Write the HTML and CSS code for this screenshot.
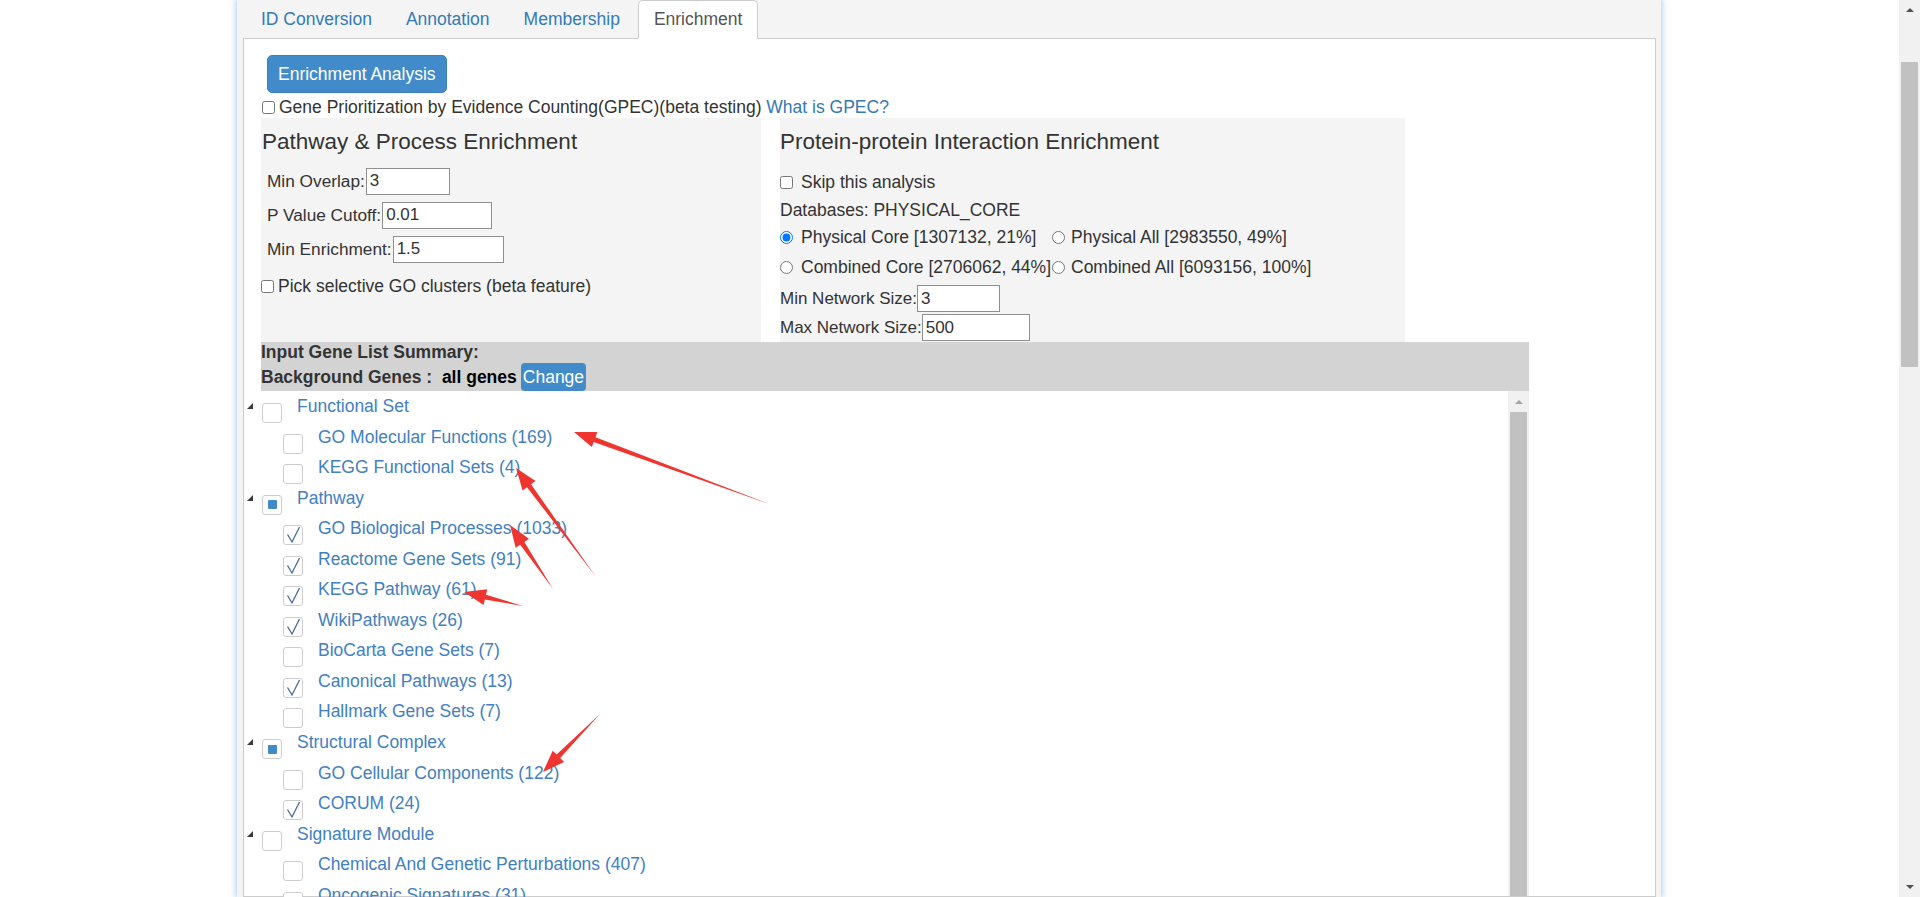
FILE: index.html
```html
<!DOCTYPE html>
<html lang="en">
  <head>
    <meta charset="UTF-8" />
    <meta name="viewport" content="width=device-width, initial-scale=1.0" />
    <title>Metascape - Enrichment</title>
    <link rel="stylesheet" href="styles.css">
  </head>
  <body>
    <div class="viewport">
      <div class="page">
        <div class="frame">
          <ul class="tabs">
            <li><a href="#">ID Conversion</a></li>
            <li><a href="#">Annotation</a></li>
            <li><a href="#">Membership</a></li>
            <li class="active"><a href="#">Enrichment</a></li>
          </ul>
          <div class="panel">
            <button class="btn-run">Enrichment Analysis</button>
            <div class="gpec">
              <input type="checkbox" class="cbx">Gene Prioritization by Evidence Counting(GPEC)(beta testing)&nbsp;<a href="#" class="link">What is GPEC?</a>
            </div>

            <div class="opts">
              <div class="box box-left">
                <h4>Pathway &amp; Process Enrichment</h4>
                <div class="field field-first">Min Overlap:<input type="text" class="num w84" value="3"></div>
                <div class="field">P Value Cutoff:<input type="text" class="num w110" value="0.01"></div>
                <div class="field">Min Enrichment:<input type="text" class="num w111" value="1.5"></div>
                <div class="pick"><input type="checkbox" class="cbx">Pick selective GO clusters (beta feature)</div>
              </div>
              <div class="box box-right">
                <h4>Protein-protein Interaction Enrichment</h4>
                <div class="row skip"><input type="checkbox" class="cbx cbx-gap">Skip this analysis</div>
                <div class="row db">Databases: PHYSICAL_CORE</div>
                <div class="radios">
                  <label><input type="radio" name="db" checked>Physical Core [1307132, 21%]</label>
                  <label class="col2"><input type="radio" name="db">Physical All [2983550, 49%]</label>
                  <label><input type="radio" name="db">Combined Core [2706062, 44%]</label>
                  <label class="col2"><input type="radio" name="db">Combined All [6093156, 100%]</label>
                </div>
                <div class="row net">Min Network Size:<input type="text" class="num w83" value="3"></div>
                <div class="row net">Max Network Size:<input type="text" class="num w108" value="500"></div>
              </div>
            </div>

            <div class="summary">
              <div class="sum-line">Input Gene List Summary:</div>
              <div class="sum-line sum-bg">Background Genes :&nbsp;&nbsp;<span class="all">all genes</span><button class="btn-change">Change</button></div>
            </div>

            <div class="tree-wrap">
              <ul class="tree">
                <li class="node parent"><i class="tri"></i><span class="cb"></span><a href="#">Functional Set</a></li>
                <li class="node child"><span class="cb"></span><a href="#">GO Molecular Functions (169)</a></li>
                <li class="node child"><span class="cb"></span><a href="#">KEGG Functional Sets (4)</a></li>

                <li class="node parent"><i class="tri"></i><span class="cb part"><b></b></span><a href="#">Pathway</a></li>
                <li class="node child"><span class="cb"><svg viewBox="0 0 20 20"><polyline points="4.5,9.5 9,17 16.5,2"/></svg></span><a href="#">GO Biological Processes (1033)</a></li>
                <li class="node child"><span class="cb"><svg viewBox="0 0 20 20"><polyline points="4.5,9.5 9,17 16.5,2"/></svg></span><a href="#">Reactome Gene Sets (91)</a></li>
                <li class="node child"><span class="cb"><svg viewBox="0 0 20 20"><polyline points="4.5,9.5 9,17 16.5,2"/></svg></span><a href="#">KEGG Pathway (61)</a></li>
                <li class="node child"><span class="cb"><svg viewBox="0 0 20 20"><polyline points="4.5,9.5 9,17 16.5,2"/></svg></span><a href="#">WikiPathways (26)</a></li>
                <li class="node child"><span class="cb"></span><a href="#">BioCarta Gene Sets (7)</a></li>
                <li class="node child"><span class="cb"><svg viewBox="0 0 20 20"><polyline points="4.5,9.5 9,17 16.5,2"/></svg></span><a href="#">Canonical Pathways (13)</a></li>
                <li class="node child"><span class="cb"></span><a href="#">Hallmark Gene Sets (7)</a></li>

                <li class="node parent"><i class="tri"></i><span class="cb part"><b></b></span><a href="#">Structural Complex</a></li>
                <li class="node child"><span class="cb"></span><a href="#">GO Cellular Components (122)</a></li>
                <li class="node child"><span class="cb"><svg viewBox="0 0 20 20"><polyline points="4.5,9.5 9,17 16.5,2"/></svg></span><a href="#">CORUM (24)</a></li>

                <li class="node parent"><i class="tri"></i><span class="cb"></span><a href="#">Signature Module</a></li>
                <li class="node child"><span class="cb"></span><a href="#">Chemical And Genetic Perturbations (407)</a></li>
                <li class="node child"><span class="cb"></span><a href="#">Oncogenic Signatures (31)</a></li>
              </ul>
              <div class="vscroll">
                <div class="up"><i></i></div>
                <div class="thumb"></div>
              </div>
            </div>
          </div>
        </div>
      </div>

      <div class="scrollbar">
        <div class="up"><i></i></div>
        <div class="thumb"></div>
        <div class="down"><i></i></div>
      </div>

      <!-- red arrows drawn on the screenshot -->
      <svg class="marks" width="1920" height="897" viewBox="0 0 1920 897">
        <polygon points="769,504 595.5,437.3 597.4,432.1 574,432 591.8,447.1 593.7,442" />
        <polygon points="596,577 531,484.2 535.5,481 516,468 522.6,490.4 527,487.2" />
        <polygon points="553,589 524.4,541.9 528.9,538.8 510,525 515.7,547.8 520.2,544.7" />
        <polygon points="523,606 486,594.7 487.3,589.3 464,592 483.6,604.9 484.8,599.5" />
        <polygon points="600,714 556.6,754.5 552.7,750.7 543,772 564.1,761.9 560.2,758.1" />
      </svg>
    </div>
  </body>
</html>
```

FILE: styles.css
```css
* {
  box-sizing: border-box;
}
html, body {
  margin: 0;
  height: 100%;
  overflow: hidden;
}
body {
  font-family: "Liberation Sans", Arial, sans-serif;
  font-size: 17.5px;
  color: #333;
  background: #fff;
}
a {
  color: #337ab7;
  text-decoration: none;
}
.viewport {
  display: flex;
  height: 897px;
  position: relative;
}
.page {
  flex: 1;
}
.frame {
  margin-left: 237px;
  width: 1424px;
  height: 100%;
  background: #f4f4f4;
  padding: 0 5px 0 6px;
  box-shadow: 0 0 6px 1px rgba(110, 165, 230, 0.6);
  display: flex;
  flex-direction: column;
}

/* tabs */
.tabs {
  list-style: none;
  margin: 0 0 -1px;
  padding: 0 0 0 2px;
  display: flex;
  height: 39px;
  position: relative;
  z-index: 1;
}
.tabs li {
  margin-right: 2px;
}
.tabs a {
  display: block;
  padding: 8px 15px 9px;
  line-height: 20px;
  border: 1px solid transparent;
  border-radius: 5px 5px 0 0;
}
.tabs .active a {
  background: #fff;
  border-color: #ccc #ccc #fff;
  color: #555;
}
.panel {
  flex: 1;
  background: #fff;
  border: 1px solid #ccc;
  padding: 16px 0 0 17px;
  display: flex;
  flex-direction: column;
  min-height: 0;
}

.btn-run {
  display: block;
  align-self: flex-start;
  margin-left: 6px;
  height: 38px;
  padding: 0 10px;
  font-family: inherit;
  font-size: 17.5px;
  color: #fff;
  background: #428bca;
  border: 1px solid #3b80c0;
  border-radius: 5px;
}
.gpec {
  display: flex;
  align-items: center;
  height: 25px;
  padding-top: 4px;
  white-space: pre;
}
.cbx {
  width: 13px;
  height: 13px;
  margin: 0 4px 0 1px;
  flex: none;
}
.cbx-gap {
  margin: 0 8px 0 0;
}

/* option boxes */
.opts {
  display: flex;
  height: 224px;
}
.box {
  background: #f4f4f4;
}
.box-left {
  width: 500px;
}
.box-right {
  width: 625px;
  margin-left: 19px;
}
.box h4 {
  margin: 0;
  padding-top: 10px;
  font-size: 22.5px;
  font-weight: normal;
  line-height: 28px;
  color: #333;
}
.box-left h4 {
  padding-left: 1px;
}
.field {
  display: flex;
  align-items: center;
  height: 34px;
  padding-left: 6px;
  font-size: 17.25px;
}
.field-first {
  margin-top: 8px;
}
.num {
  height: 27px;
  margin-left: 1px;
  padding: 1px 3px;
  border: 1px solid #8f8f8f;
  font-family: inherit;
  font-size: 17px;
  color: #333;
  background: #fff;
}
.w84 { width: 84px; }
.w110 { width: 110px; }
.w111 { width: 111px; }
.w83 { width: 83px; }
.w108 { width: 108px; }
.pick {
  display: flex;
  align-items: center;
  height: 34px;
  margin-top: 3px;
}
.pick .cbx {
  margin: 0 4px 0 0;
}
.row {
  display: flex;
  align-items: center;
  height: 28px;
}
.skip {
  margin-top: 12px;
}
.radios {
  display: grid;
  grid-template-columns: 272px auto;
  grid-template-rows: 26px 34px;
}
.radios label {
  display: flex;
  align-items: center;
  white-space: nowrap;
}
.radios input {
  width: 13px;
  height: 13px;
  margin: 0 8px 0 0;
}
.radios .col2 input {
  margin-right: 6px;
}
.net {
  height: 29px;
  font-size: 17px;
}
.net .num {
  margin-left: 0;
}

/* summary bar */
.summary {
  width: 1268px;
  background: #d3d3d3;
  font-weight: bold;
  color: #333;
}
.sum-line {
  height: 21px;
  line-height: 21px;
}
.sum-bg {
  display: flex;
  align-items: center;
  height: 28px;
}
.all {
  color: #000;
}
.btn-change {
  height: 28px;
  margin-left: 4px;
  padding: 0 2px;
  font-family: inherit;
  font-size: 17.5px;
  color: #fff;
  background: #428bca;
  border: 0;
  border-radius: 4px;
}

/* tree */
.tree-wrap {
  width: 1268px;
  flex: 1;
  display: flex;
  min-height: 0;
}
.tree {
  flex: 1;
  list-style: none;
  margin: 0;
  padding: 0;
}
.node {
  display: flex;
  height: 30.56px;
  line-height: 30.56px;
}
.node a {
  color: #4280c2;
  margin-left: 15px;
  white-space: nowrap;
}
.child {
  padding-left: 22px;
}
.tri {
  width: 16px;
  margin-left: -16px;
  flex: none;
  position: relative;
}
.tri::after {
  content: "";
  position: absolute;
  left: 2px;
  top: 12px;
  border-left: 6px solid transparent;
  border-bottom: 6px solid #3a3a3a;
}
.parent .cb {
  margin-left: 1px;
}
.cb {
  flex: none;
  width: 20px;
  height: 20px;
  margin-top: 12px;
  background: #fff;
  border: 1px solid #cdcdcd;
  border-radius: 3px;
  display: flex;
  align-items: center;
  justify-content: center;
}
.cb b {
  width: 9px;
  height: 9px;
  background: #428bca;
  border-radius: 1px;
}
.cb svg {
  width: 20px;
  height: 20px;
  margin: -1px;
  fill: none;
  stroke: #4a6a98;
  stroke-width: 1.3;
}
.vscroll {
  width: 21px;
  background: #f1f1f1;
  display: flex;
  flex-direction: column;
}
.vscroll .up {
  height: 21px;
  display: flex;
  align-items: center;
  justify-content: center;
}
.vscroll .up i {
  border-left: 4px solid transparent;
  border-right: 4px solid transparent;
  border-bottom: 4px solid #a3a3a3;
}
.vscroll .thumb {
  flex: 1;
  margin: 0 2px;
  background: #c1c1c1;
}

/* browser scrollbar */
.scrollbar {
  width: 21px;
  background: #f1f1f1;
  display: flex;
  flex-direction: column;
}
.scrollbar .up,
.scrollbar .down {
  height: 20px;
  display: flex;
  align-items: center;
  justify-content: center;
}
.scrollbar .up i {
  border-left: 4px solid transparent;
  border-right: 4px solid transparent;
  border-bottom: 4px solid #505050;
}
.scrollbar .down {
  margin-top: auto;
}
.scrollbar .down i {
  border-left: 4px solid transparent;
  border-right: 4px solid transparent;
  border-top: 4px solid #505050;
}
.scrollbar .thumb {
  height: 305px;
  margin: 42px 2px 0;
  background: #c1c1c1;
}

.marks {
  position: absolute;
  left: 0;
  top: 0;
  pointer-events: none;
}
.marks polygon {
  fill: #ee3530;
}
```
